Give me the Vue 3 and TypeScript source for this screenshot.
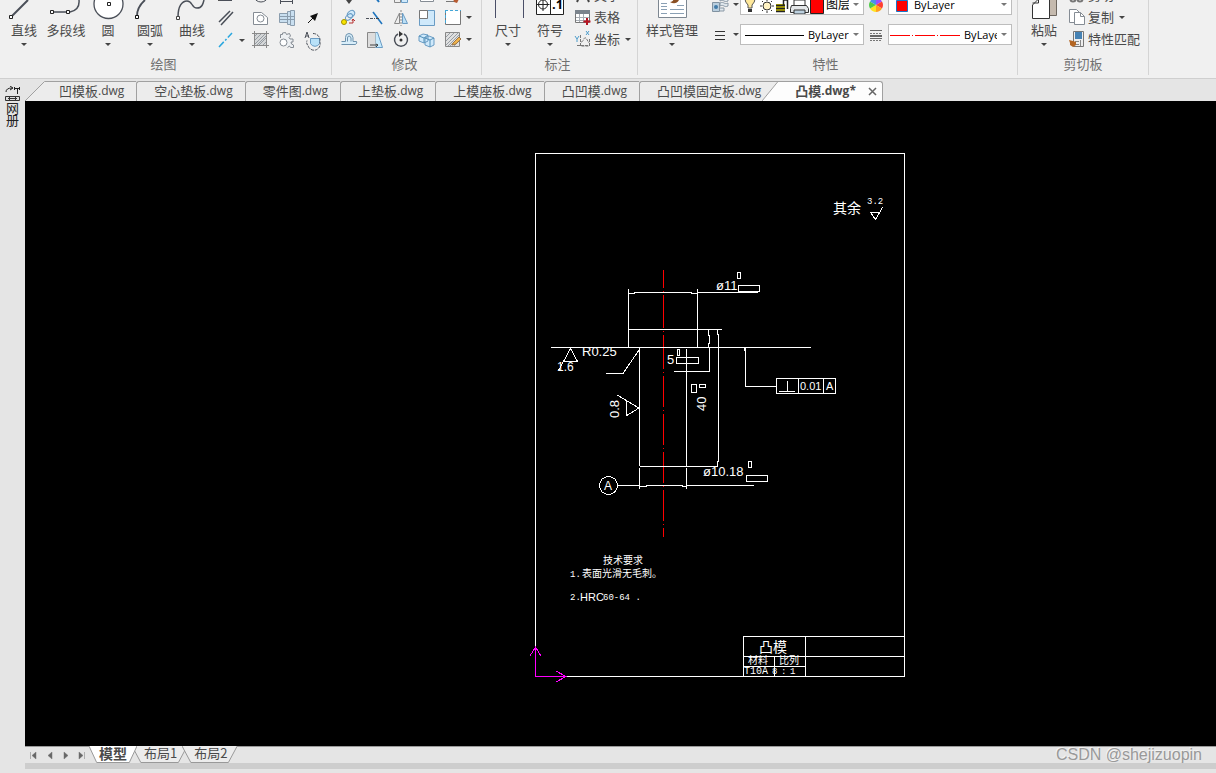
<script setup lang="ts">
import { ref } from 'vue'

interface BigTool { label: string; icon: string; arrow?: boolean }
interface SmallTool { label: string; icon: string }

const ink = 'fill="none" stroke="#4a4f58"'
const blue = 'fill="#cfe9fb" stroke="#6a9cc4"'

const drawTools: BigTool[] = [
  { label: '直线', arrow: true, icon: `<path d="M9 16 25 0" ${ink} stroke-width="2"/><path d="M6.500 15.500h3v3h-3z" fill="#fff" stroke="#222"/>` },
  { label: '多段线', icon: `<path d="M7 12H25Q35 10 34 0" ${ink} stroke-width="1.500"/><path d="M5.500 10.500h3v3h-3zM21.500 10.500h3v3h-3z" fill="#fff" stroke="#222"/>` },
  { label: '圆', arrow: true, icon: `<circle cx="21.500" cy="4" r="14.500" fill="#fff" stroke="#4a4f58" stroke-width="1.300"/><path d="M20.500 2.500h3v3h-3z" fill="#fff" stroke="#222"/>` },
  { label: '圆弧', arrow: true, icon: `<path d="M8 16Q8 7 16 0" ${ink} stroke-width="1.800"/><path d="M6.500 15.500h3v3h-3z" fill="#fff" stroke="#111"/>` },
  { label: '曲线', arrow: true, icon: `<path d="M7 17C7 6 11 1 16 1C22 1 20 8 26 8C31 8 32 4 33 0" ${ink} stroke-width="1.500"/><path d="M5.500 16.500h3v3h-3z" fill="#fff" stroke="#444"/>` },
]

const hatch = '<path d="M4 8 8 4M4 12 12 4M4 16 16 4M8 17 17 8M12 17 17 12M6 17 17 6" stroke="#969da4" fill="none"/>'

const drawSmall: SmallTool[] = [
  { label: '矩形', icon: `<path d="M4 15.500h13" ${ink}/><path d="M3 14h2v2h-2z" fill="#555"/>` },
  { label: '椭圆', icon: `<ellipse cx="11" cy="11" rx="7" ry="6" ${ink}/>` },
  { label: '构造线', icon: `<path d="M4 16.500h13M4.500 13v6M16.500 13v6" ${ink}/>` },
  { label: '点', icon: '' },
  { label: '双线', icon: `<path d="M4 15 15 4M6 18 18 5" ${ink} stroke-width="1.500"/>` },
  { label: '面域', icon: `<path d="M3.500 5.500h8l6 5v7h-14z" fill="#fff" stroke="#858c94"/><circle cx="10.500" cy="11.500" r="3.500" fill="#fff" stroke="#858c94"/>` },
  { label: '螺栓', icon: `<path d="M3.500 6.500h8v9h-8zM11.500 4.500h3v13h-3zM14.500 3.500h4v15h-4z" fill="#c9dff0" stroke="#8a9dae"/><path d="M4 9.500h14M4 12.500h14" stroke="#8a9dae"/>` },
  { label: '箭头', icon: `<path d="m6 16 5-5" stroke="#111"/><path d="m16 6-3 8-5-5z" fill="#111"/>` },
  { label: '中心线', icon: `<path d="M4 18 17 4" stroke="#2aa7df" stroke-width="1.500" stroke-dasharray="7 2 2 2"/>` },
  { label: '图案填充', icon: `<path d="M4 4h13v13h-13z" fill="#d5d7d8"/>${hatch}<path d="M2 4.500h17M2 16.500h17M4.500 2v17M16.500 2v17" stroke="#8a8a8a"/>` },
  { label: '齿轮', icon: `<path d="M4.500 9V5.500h2V4l3-.500 1 2 3-1 1 2.500-1.500 1.500 1 1.500h3v3h-2l.500 2 2 1v2.500h-3l-1-1.500-2 1.500" fill="#edf0f3" stroke="#858c94"/><circle cx="7.500" cy="13.500" r="3.500" fill="#fff" stroke="#858c94"/>` },
  { label: '旋转视图', icon: `<path d="M8.500 9.500h9v5a5 5 0 0 1-9 0z" fill="#b8e1f8" stroke="#6a9cc4"/><path d="M11 4.500a7 7 0 0 1 7 6v3a6 6 0 0 1-12 3q-2-2-1-5" ${ink} stroke-dasharray="3 1"/><path d="m3 9 2-6 2 6M4 7h3" ${ink}/>` },
]

const modifySmall: SmallTool[] = [
  { label: '移动', icon: '<path d="M8 15h6l-3 4z" fill="#444"/>' },
  { label: '修剪', icon: '<path d="m12 13 3 4" stroke="#1e74bd" stroke-width="2"/>' },
  { label: '阵列', icon: `<path d="M4.500 8.500h6v9h-6z" fill="#eee" stroke="#888"/><path d="M11.500 8.500h6v9h-6z" ${blue}/>` },
  { label: '圆角', icon: '<path d="M4.500 5v11.500h13V5" fill="#fff" stroke="#858c94"/>' },
  { label: '删除', icon: '<path d="M4 16.500h8" stroke="#777"/><path d="m11 13 6 1-2 4-3-1z" fill="#b65a30"/>' },
  { label: '', icon: '' },
  { label: '复制', icon: `<ellipse cx="13" cy="7" rx="4" ry="3" transform="rotate(-40 13 7)" ${blue}/><ellipse cx="11" cy="10" rx="4" ry="2.500" transform="rotate(-40 11 10)" fill="none" stroke="#6a9cc4"/><circle cx="6" cy="15" r="2.500" fill="#f8e500" stroke="#a39000"/><path d="M11 16h4v-4m-1 2 1-2 2 2" fill="none" stroke="#b63030"/>` },
  { label: '延伸', icon: `<path d="M2 11.500h9" ${ink} stroke-dasharray="3 1"/><path d="m9 5 9 12" stroke="#1e74bd" stroke-width="1.500"/><path d="M12 11.500h3" stroke="#444"/>` },
  { label: '镜像', icon: '<path d="M9.500 6v10.500h-5z" fill="#eee" stroke="#888"/><path d="M12.500 6v10.500h5z" fill="#bbdff5" stroke="#6a9cc4"/><path d="M11 3v16" stroke="#888" stroke-dasharray="2 1"/>' },
  { label: '缩放', icon: `<path d="M3.500 3.500h15v15h-15z" ${blue}/><path d="M3.500 3.500h8v8h-8z" fill="#fff" stroke="#777"/>` },
  { label: '拉伸', icon: '<path d="M3.500 3.500h15v14h-15z" fill="#fff"/><path d="M18.500 3.500v14h-15v-14" fill="none" stroke="#777"/><path d="M3 3.500h16M3.500 3v15" stroke="#45a6d6" stroke-dasharray="3 2"/>' },
  { label: '更多', icon: '<path d="M0 9h6l-3 3z" fill="#444"/>' },
  { label: '偏移', icon: `<path d="M3.500 12.500h4V8.500q0-4 3.500-4t4 4v4h3.500q1 1.500-1 3H3.500M9.500 12.500V9q0-2 1.500-2t2 2v3.500" fill="#d9eefa" stroke="#6d92ad"/>` },
  { label: '倒角', icon: '<path d="M3.500 3.500h8v15h-8z" fill="#ddd" stroke="#888"/><path d="M11.500 3.500h2l5 15h-7" fill="#c6eafd" stroke="#6a9cc4"/><path d="M6 16h8m-2-1 2 1-2 2" fill="none" stroke="#444"/>' },
  { label: '旋转', icon: `<path d="M8 5a6.500 6.500 0 1 0 6 0" ${ink} stroke-width="1.500"/><path d="m9 2 4 3-4 3z" fill="#333"/><circle cx="11" cy="11" r="1.500" fill="#333"/>` },
  { label: '三维阵列', icon: `<path d="m3 7 4-2 5 1v6l-4 2-5-2zM9 9l4-2 5 2v7l-4 2-5-2z" ${blue}/><path d="m3 7 5 2v5m-5-7M9 9l5 2v7m0-7 4-2M8 9l4-3" fill="none" stroke="#5290b8"/>` },
  { label: '填充编辑', icon: `<path d="M4 4h13v13h-13z" fill="#e0e0e0"/>${hatch}<path d="M3.500 3.500h14v14h-14z" fill="none" stroke="#888"/><path d="m11 14 6-6 2 2-5 5-4 1z" fill="#efb34b" stroke="#9c7545"/>` },
  { label: '更多', icon: '<path d="M0 9h6l-3 3z" fill="#444"/>' },
]

const annotateTools: BigTool[] = [
  { label: '尺寸', arrow: true, icon: '<path d="M8.500 0v18M36.500 0v18" stroke="#4a4f68"/>' },
  { label: '符号', arrow: true, icon: '<path d="M7.500-4h27v18.500h-27z" fill="#fff" stroke="#222"/><path d="M21.500 0v14" stroke="#222"/><circle cx="14" cy="4.500" r="4.500" fill="none" stroke="#222"/><path d="M14-2v13M7.500 4.500h13" stroke="#222"/><text x="23" y="9" font-size="13" font-weight="700" font-family="Open Sans, sans-serif">.1</text>' },
]

const styleTool: BigTool = {
  label: '样式管理', arrow: true,
  icon: '<path d="M7.500-4h28v21.500h-28z" fill="#fff" stroke="#7d8791"/><path d="M10 3.500h6M10 6.500h6M10 9.500h6M10 13.500h6M19 9.500h14M19 13.500h14M26 5.500h7" stroke="#8aa0b4"/><path d="M28 0c-2 4-6 4-9 2 3 0 3-2 4-3z" fill="#8a4f22"/>',
}
const pasteTool: BigTool = {
  label: '粘贴', arrow: true,
  icon: '<path d="M26-3h7.500v18.500h-7.500z" fill="#c5baae" stroke="#6e675f"/><path d="M9.500 5l6-6h11v19.500h-17z" fill="#fff" stroke="#333"/><path d="M15.500-1v4h-6" fill="none" stroke="#333"/>',
}

interface DocTab { name: string; ext: string; active?: boolean }
const docs = ref<DocTab[]>([
  { name: '凹模板', ext: '.dwg' },
  { name: '空心垫板', ext: '.dwg' },
  { name: '零件图', ext: '.dwg' },
  { name: '上垫板', ext: '.dwg' },
  { name: '上模座板', ext: '.dwg' },
  { name: '凸凹模', ext: '.dwg' },
  { name: '凸凹模固定板', ext: '.dwg' },
  { name: '凸模', ext: '.dwg*', active: true },
])

const sheets = ['模型', '布局1', '布局2']
const activeSheet = ref('模型')
const navIcons = [
  { label: '第一页', d: 'M2.500 2v7M8 2v7L4 5.500z' },
  { label: '上一页', d: 'M8 2v7L4 5.500z' },
  { label: '下一页', d: 'M4 2v7l4-3.500z' },
  { label: '最后一页', d: 'M3 2v7l4-3.500zM8.500 2v7' },
]
</script>

<template>
  <div class="app">
    <header class="ribbon">
      <section class="group draw">
        <div class="body">
          <div class="bigs">
            <button v-for="t in drawTools" :key="t.label" class="big">
              <svg width="42" height="20" v-html="t.icon" />
              <span>{{ t.label }}</span>
              <i v-if="t.arrow" class="caret" />
            </button>
          </div>
          <div class="smalls draw-grid">
            <button v-for="(t, i) in drawSmall" :key="i" class="small" :aria-label="t.label">
              <svg width="22" height="22" v-html="t.icon" />
              <i v-if="i === 8" class="caret" />
            </button>
          </div>
        </div>
        <h2>绘图</h2>
      </section>

      <section class="group modify">
        <div class="body">
          <div class="smalls modify-grid">
            <button v-for="(t, i) in modifySmall" :key="i" class="small" :aria-label="t.label">
              <svg width="22" height="22" v-html="t.icon" />
            </button>
          </div>
        </div>
        <h2>修改</h2>
      </section>

      <section class="group annotate">
        <div class="body">
          <div class="bigs">
            <button v-for="t in annotateTools" :key="t.label" class="big">
              <svg width="42" height="20" v-html="t.icon" />
              <span>{{ t.label }}</span>
              <i class="caret" />
            </button>
          </div>
          <div class="list">
            <button class="row">
              <svg width="18" height="18"><path d="m3 16 6-14 6 14M6 12h6" fill="none" stroke="#444" stroke-width="2" /></svg>文字
            </button>
            <button class="row">
              <svg width="18" height="18">
                <path d="M1.500 2.500h14v12h-14z" fill="#fff" stroke="#777" />
                <path d="M1 2h15v4h-15z" fill="#7b838c" />
                <path d="M2 9.500h13M2 12.500h13M5.500 6v8M9.500 6v8" stroke="#a7adb4" />
                <path d="M13 10v7M9.500 13.500h7" stroke="#b71522" stroke-width="2" />
              </svg>表格
            </button>
            <button class="row">
              <svg width="18" height="18">
                <path d="M6.500 5v11h9V9M7 12c3 0 2-5 5-4l3 5M3 15.500h11" fill="none" stroke="#777" stroke-dasharray="3 1" />
                <path d="m1 6 2 3 2-3M3 9v3M12 1l3 4m0-4-3 4" fill="none" stroke="#4d9ccb" />
              </svg>坐标<i class="caret" />
            </button>
          </div>
        </div>
        <h2>标注</h2>
      </section>

      <section class="group props">
        <div class="body">
          <button class="big">
            <svg width="42" height="20" v-html="styleTool.icon" />
            <span>{{ styleTool.label }}</span>
            <i class="caret" />
          </button>
          <div class="prop-grid">
            <button class="picker" aria-label="图层管理">
              <svg width="18" height="20">
                <path d="M1.500 7.500h7v9h-7z" fill="#b9cede" stroke="#8192a1" /><circle cx="5" cy="12" r="2" fill="#427ba9" />
                <path d="M9 3c4-2 4 2 8 0v3c-4 2-4-2-8 0zM9 8c4-2 4 2 8 0v3c-4 2-4-2-8 0zM9 13h4v3h-4" fill="#dfe7ed" stroke="#8a98a5" />
              </svg><i class="caret" />
            </button>
            <div class="combo">
              <svg width="83" height="20">
                <path d="M7 13V10q-3-3-3-6h10q0 3-3 6v3z" fill="#ffe89a" stroke="#555" /><path d="M7 14h4v3h-4z" fill="#333" />
                <circle cx="26" cy="11" r="4" fill="#fff3c4" stroke="#333" /><path d="M26 4v2M26 16v2M19 11h2M31 11h2M21 6l1 1M31 6l-1 1M21 16l1-1M31 16l-1-1" stroke="#333" />
                <path d="M35 9h9v8h-9z" fill="#b8ae00" /><path d="M35 10.500h9M35 13.500h9M35 16.500h9M42.500 10V5h4v9" fill="none" stroke="#222" stroke-width="1.500" />
                <path d="M53 5h11v6h-11z" fill="#fff" stroke="#333" /><path d="M50.500 10.500h15l2 3v4h-18v-4z" fill="#e4e7e9" stroke="#333" /><path d="M53 15h11v4h-11z" fill="#bcd0df" stroke="#333" />
                <path d="M69.500 4.500h13v14h-13z" fill="#f00" stroke="#222" />
              </svg>
              <select class="layer" aria-label="图层"><option>图层(</option></select>
            </div>
            <svg class="wheel" width="16" height="16" viewBox="0 0 16 16">
              <path d="M8 8V1a7 7 0 0 1 6 3.500z" fill="#9b4dff" /><path d="m8 8 6-3.500a7 7 0 0 1 0 7z" fill="#ff3f30" />
              <path d="m8 8 6 3.500A7 7 0 0 1 8 15z" fill="#ff9f20" /><path d="M8 8v7a7 7 0 0 1-6-3.500z" fill="#ffe321" />
              <path d="m8 8-6 3.500a7 7 0 0 1 0-7z" fill="#50cb48" /><path d="M8 8 2 4.500A7 7 0 0 1 8 1z" fill="#4a91ea" />
            </svg>
            <div class="combo">
              <svg width="23" height="20"><path d="M7.500 5.500h11v11h-11z" fill="#f00" stroke="#1875c8" /></svg>
              <select aria-label="颜色"><option>ByLayer</option></select>
            </div>
            <button class="picker" aria-label="线宽设置">
              <svg width="18" height="20"><path d="M4 6.500h10M4 10.500h10M4 14.500h10" stroke="#333" /></svg><i class="caret" />
            </button>
            <div class="combo">
              <svg width="65" height="20"><path d="M4 10.500h59" stroke="#000" /></svg>
              <select aria-label="线宽"><option>ByLayer</option></select>
            </div>
            <svg class="wheel" width="16" height="16"><path d="M2 3.500h12M2 11.500h12" stroke="#666" /><path d="M2 6.500h12M2 13.500h12" stroke="#777" stroke-dasharray="2 1" /><path d="M2 9h12" stroke="#666" stroke-width="2" /></svg>
            <div class="combo">
              <svg width="73" height="20"><path d="M1 10.500h20M23 10.500h1M26 10.500h20M48 10.500h1M51 10.500h20" stroke="#f00" /></svg>
              <select aria-label="线型"><option>ByLayer</option></select>
            </div>
          </div>
        </div>
        <h2>特性</h2>
      </section>

      <section class="group clip">
        <div class="body">
          <button class="big">
            <svg width="42" height="20" v-html="pasteTool.icon" />
            <span>{{ pasteTool.label }}</span>
            <i class="caret" />
          </button>
          <div class="list">
            <button class="row">
              <svg width="18" height="18"><path d="m6 11 6-8M12 11 6 3" stroke="#777" /><circle cx="5" cy="13" r="2.500" fill="none" stroke="#777" stroke-width="2" /><circle cx="12" cy="13" r="2.500" fill="none" stroke="#777" stroke-width="2" /></svg>剪切
            </button>
            <button class="row">
              <svg width="18" height="18"><path d="M1.500 1.500h7l3 3v10h-10z" fill="#fff" stroke="#858c94" /><path d="M6.500 4.500h6l4 4v8h-10z" fill="#fff" stroke="#858c94" /><path d="M12.500 4.500v4h4" fill="none" stroke="#858c94" /></svg>复制<i class="caret" />
            </button>
            <button class="row">
              <svg width="18" height="18"><path d="M5.500 1.500h10v15h-10z" fill="#eee" stroke="#777" /><path d="M7 2h7v7h-7z" fill="#4682b4" /><path d="M7 11.500h4M7 14.500h4M12.500 10v6" stroke="#888" /><path d="m1 10 4 1 3 1v3l-3 2-3-2v-2z" fill="#b36523" /></svg>特性匹配
            </button>
          </div>
        </div>
        <h2>剪切板</h2>
      </section>
    </header>

    <div class="workspace">
      <aside class="palette">
        <svg width="15" height="16"><path d="M1 6q0-4 6-4M5 0l3 2-3 2M9 2.500h6M12.500 2v6M9.500 1v3M14.500 1v3" fill="none" stroke="#222" /><path d="M.500 10.500h14v4h-14zM3 12.500h9M4.500 11v3M10.500 11v3" fill="#ddd" stroke="#333" /></svg>
        <span>网册</span>
      </aside>
      <main class="main">
        <nav class="docs">
          <svg class="lead" width="20" height="20"><path d="M0 20 20 0v20z" fill="#ececec" /><path d="M0 20 19.500.500H20" fill="none" stroke="#a0a0a0" /></svg>
          <template v-for="d in docs" :key="d.name">
            <svg v-if="d.active" width="16" height="20"><path d="M0 0h16v20H0z" fill="#ececec" /><path d="M0 20 16 0v20z" fill="#fdfdfd" /><path d="M0 .500h16L0 20" fill="none" stroke="#a0a0a0" /></svg>
            <button class="doc" :class="{ active: d.active }">
              <span>{{ d.name }}</span><span class="ext">{{ d.ext }}</span>
              <svg v-if="d.active" class="close" width="9" height="9"><path d="m1 1 7 7M8 1 1 8" stroke="#666" stroke-width="1.500" /></svg>
            </button>
          </template>
        </nav>

        <div class="canvas">
          <svg class="drawing" viewBox="25 101 1191 645" fill="none" stroke="#fff" shape-rendering="crispEdges">
            <path d="M535.500 153.500h369v523h-369z" />
            <!-- centre line -->
            <path d="M663.500 270v267" stroke="#f00" stroke-dasharray="18 3 1 3 33 3 1 3 34 3 1 3 31 3 1 3 31 3 1 3 31 3 1 3 31 3 1 3" />
            <!-- punch head -->
            <path d="M628.500 289v58M697.500 289v58M628.500 293.500h6v-1h57v1h6M697.500 292.500h60M628.500 329.500h93M551 347.500h260" />
            <!-- shank -->
            <path d="M639.500 347v119M686.500 349v117M639.500 466.500h78M639.500 468v21M686.500 468v21M617 485.500h23M640 486.500h6v-1h36v1h5M687 485.500h67" />
            <!-- length dimensions -->
            <path d="M708.500 329v6l1 1v7l-1 1v4M709.500 348v23.500h-36M717.500 329v5l1 1v126l-1 1v4" />
            <path d="M606 373.500h17l17-25M745.500 348v38h31" />
            <path d="M744 348h2v3h-2z" fill="#fff" stroke="none" />
            <!-- surface finish marks -->
            <path d="m570.500 348.500-7 13h14zM563.500 361.500l-5 9M617 395l22 13-13 8v-16M870.500 212.500h9l-4 7zM875.500 219.500l7-12" />
            <!-- tolerance boxes -->
            <path d="M737.500 272.500h3v6h-3zM738.500 285.500h21v6h-21zM677.500 349.500h2v6h-2zM676.500 357.500h22v6h-22zM748.500 461.500h3v6h-3zM746.500 475.500h21v6h-21zM691.500 384.500h5v8h-5zM699.500 384.500h6v3h-6z" />
            <path d="M776.500 378.500h59v15h-59zM798.500 379v14M823.500 379v14M779 391.500h16M787.500 381v10" />
            <circle cx="608.500" cy="485.500" r="9" />
            <!-- title block -->
            <path d="M743.500 676v-40h161M743 656.500h161M805.500 636v40M743 666.500h62M774.500 656v20" />
            <!-- origin -->
            <path d="M535.500 647v29.500H566M530 656l5.500-9 5.500 9M556 671l10 5.500-10 5.500" stroke="#f0f" />
            <g class="cad">
              <text x="716" y="290">ø11</text>
              <text x="582" y="356">R0.25</text>
              <text x="557" y="371" class="c12">1.6</text>
              <text x="667" y="364">5</text>
              <text transform="translate(706 411) rotate(-90)">40</text>
              <text transform="translate(619 418) rotate(-90)">0.8</text>
              <text x="703" y="476">ø10.18</text>
              <text x="800" y="390" class="c11">0.01</text>
              <text x="826" y="390" class="c11">A</text>
              <text x="604" y="490" class="c12">A</text>
              <text x="833" y="213" class="zh14">其余</text>
              <text x="867" y="204" class="mono">3.2</text>
              <text x="603" y="564" class="zh10">技术要求</text>
              <text x="570" y="577" class="mono">1.</text>
              <text x="582" y="577" class="zh10">表面光滑无毛刺。</text>
              <text x="570" y="600" class="mono">2.</text>
              <text x="580" y="601" class="c11">HRC</text>
              <text x="603" y="600" class="mono">60-64 .</text>
              <text x="759" y="652" class="zh14">凸模</text>
              <text x="748" y="664" class="zh10">材料</text>
              <text x="779" y="664" class="zh10">比列</text>
              <text x="744" y="674" class="mono m10">T10A</text>
              <text x="772" y="674" class="mono"><tspan x="772">8</tspan><tspan x="781">:</tspan><tspan x="790">1</tspan></text>
            </g>
          </svg>
        </div>

        <footer class="sheets">
          <button v-for="n in navIcons" :key="n.label" class="nav" :aria-label="n.label">
            <svg width="11" height="11"><path :d="n.d" fill="#666" stroke="#777" stroke-width=".5" /></svg>
          </button>
          <button v-for="s in sheets" :key="s" class="sheet" :class="{ active: s === activeSheet }" @click="activeSheet = s">
            <svg viewBox="0 0 50 17" preserveAspectRatio="none"><path d="M0 0 8 16.500H42L50 0" vector-effect="non-scaling-stroke" /></svg>
            <span>{{ s }}</span>
          </button>
          <span class="mark">CSDN @shejizuopin</span>
        </footer>
        <div class="scroll" />
      </main>
    </div>
  </div>
</template>

<style>
body { margin: 0; overflow: hidden; }
</style>

<style scoped>
* { box-sizing: border-box; }
.app {
  display: flex; flex-direction: column; height: 100vh; background: #e5e5e5; color: #4a4a4a;
  font: 13px/18px "Noto Sans CJK SC", "Open Sans", sans-serif;
}
button { border: 0; padding: 0; margin: 0; background: none; color: inherit; font: inherit; }
svg { display: block; flex: none; }

.ribbon { display: flex; flex: none; height: 79px; background: #f0f0f0; border-bottom: 1px solid #cfcfcf; overflow: hidden; }
.group { display: flex; flex-direction: column; flex: none; border-right: 1px solid #d4d4d4; margin-bottom: 3px; }
.body { display: flex; height: 55px; padding-left: 5px; }
h2 { margin: 0; padding-right: 4px; font-size: 13px; font-weight: 400; line-height: 18px; text-align: center; color: #707070; }
.draw { width: 332px; }
.draw .body { padding-left: 3px; }
.modify { width: 150px; }
.modify .body { padding-left: 4px; }
.annotate { width: 156px; }
.props { width: 380px; }
.props .body { padding-left: 8px; }
.clip { width: 131px; }
.clip h2 { padding-right: 0; }

.bigs { display: flex; }
.big { display: flex; flex-direction: column; align-items: center; min-width: 42px; height: 51px; white-space: nowrap; }
.big span { line-height: 20px; }
.caret { width: 0; height: 0; border: 3px solid transparent; border-top-color: #444; border-bottom: 0; flex: none; }
.big .caret { margin-top: 3px; }

.smalls { display: grid; grid-auto-rows: 22px; margin-top: -15px; }
.draw-grid { grid-template-columns: 35px 26px 26px 26px; }
.modify-grid { grid-template-columns: repeat(5, 26px) 12px; }
.small { display: flex; align-items: center; padding-left: 2px; overflow: hidden; }
.modify-grid .small:nth-child(6n) { padding-left: 0; justify-content: flex-start; }
.draw-grid .caret { margin-left: 2px; }

.list { display: flex; flex-direction: column; margin-top: -16px; padding-left: 3px; }
.row { display: flex; align-items: center; gap: 2px; height: 22px; white-space: nowrap; }
.row .caret { margin-left: 3px; }

.prop-grid { display: grid; grid-template-columns: 29px 124px 24px 124px; grid-auto-rows: 21px; row-gap: 9px; margin: -6px 0 0 13px; }
.picker { display: flex; align-items: center; gap: 4px; }
.wheel { align-self: center; justify-self: center; }
.combo { display: flex; align-items: center; background: #fff; border: 1px solid #bdbdbd; position: relative; padding-right: 14px; overflow: hidden; }
.combo::after { content: ""; position: absolute; right: 4px; top: 8px; border: 3px solid transparent; border-top-color: #777; border-bottom: 0; }
select { appearance: none; flex: 1; min-width: 0; border: 0; padding: 0 0 0 2px; background: none; color: #000; font: 11px/18px "Open Sans", "Noto Sans CJK SC", sans-serif; height: 19px; }
select.layer { font-size: 12px; }

.workspace { display: flex; flex: 1; min-height: 0; }
.palette { width: 25px; flex: none; padding: 7px 5px; display: flex; flex-direction: column; align-items: center; }
.palette span { width: 13px; line-height: 12px; font-size: 13px; color: #222; }
.main { flex: 1; min-width: 0; display: flex; flex-direction: column; }
.docs { display: flex; align-items: flex-end; height: 22px; flex: none; }
.doc { display: flex; align-items: center; height: 20px; padding: 0 12px 2px 17px; background: #ececec; border-top: 1px solid #a0a0a0; border-left: 1px solid #a0a0a0; border-radius: 3px 0 0 0; white-space: nowrap; }
.lead + .doc { border-left: 0; padding-left: 14px; border-radius: 0; }
.doc:nth-last-child(3) { padding-right: 1px; }
.ext { font: 12px/18px "Open Sans", sans-serif; }
.doc.active { background: #fdfdfd; border-left: 0; border-right: 1px solid #a0a0a0; border-radius: 0 3px 0 0; padding: 0 5px 2px 17px; font-weight: 700; }
.doc.active .ext { font-weight: 700; }
.close { margin: 2px 0 0 12px; }

.canvas { flex: 1; min-height: 0; background: #000; overflow: hidden; }
.drawing { width: 100%; height: 100%; }
.cad text { fill: #fff; stroke: none; font: 13px "Liberation Sans", sans-serif; }
.cad .c12 { font-size: 12px; }
.cad .c11 { font-size: 11px; }
.cad .zh14 { font: 14px "Noto Sans CJK SC", sans-serif; }
.cad .zh10 { font: 10px "Noto Sans CJK SC", sans-serif; }
.cad .mono { font: 9px "Liberation Mono", monospace; }
.cad .m10 { font-size: 10px; }

.sheets { display: flex; flex: none; height: 17px; border-top: 1px solid #999; }
.nav { width: 16px; display: flex; align-items: center; justify-content: center; }
.sheet { position: relative; height: 17px; padding: 0 10px; margin-right: -5px; margin-top: -1px; }
.sheet svg { position: absolute; inset: 0; width: 100%; height: 100%; }
.sheet path { fill: #ececec; stroke: #999; }
.sheet.active path { fill: #fff; }
.sheet span { position: relative; line-height: 14px; height: 17px; display: block; }
.sheet:not(.active) { padding: 0 10px 0 12px; }
.sheet.active { font-weight: 700; font-size: 14px; z-index: 1; }
.mark { margin-left: auto; margin-right: 14px; font: 16px/15px "Liberation Sans", sans-serif; color: #999; text-shadow: -1px -1px 0 #f4f4f4; }
.scroll { height: 6px; margin-bottom: 4px; background: #cdcdcd; flex: none; }
</style>
